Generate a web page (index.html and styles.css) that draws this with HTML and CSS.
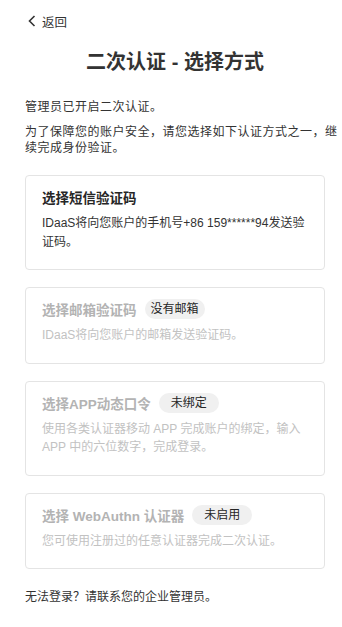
FILE: index.html
```html
<!DOCTYPE html>
<html lang="zh-CN">
<head>
    <meta charset="UTF-8">
    <meta name="viewport" content="width=device-width, initial-scale=1.0">
    <title>二次认证 - 选择方式</title>
    <link rel="stylesheet" href="styles.css">
</head>
<body>
    <div class="page">
        <a class="back" href="#">
            <svg width="8" height="12" viewBox="0 0 8 12"><polyline points="6.5,1 1.5,6 6.5,11" fill="none" stroke="#333" stroke-width="1.6"/></svg>
            <span>返回</span>
        </a>
        <h2 class="title">二次认证 - 选择方式</h2>
        <p class="intro">管理员已开启二次认证。</p>
        <p class="intro">为了保障您的账户安全，请您选择如下认证方式之一，继续完成身份验证。</p>

        <div class="method">
            <div class="method-head">
                <span class="method-name">选择短信验证码</span>
            </div>
            <p class="method-desc">IDaaS将向您账户的手机号+86 159******94发送验证码。</p>
        </div>

        <div class="method disabled">
            <div class="method-head">
                <span class="method-name">选择邮箱验证码</span>
                <span class="tag">没有邮箱</span>
            </div>
            <p class="method-desc">IDaaS将向您账户的邮箱发送验证码。</p>
        </div>

        <div class="method disabled">
            <div class="method-head">
                <span class="method-name">选择APP动态口令</span>
                <span class="tag">未绑定</span>
            </div>
            <p class="method-desc">使用各类认证器移动 APP 完成账户的绑定，输入 APP 中的六位数字，完成登录。</p>
        </div>

        <div class="method disabled">
            <div class="method-head">
                <span class="method-name">选择 WebAuthn 认证器</span>
                <span class="tag">未启用</span>
            </div>
            <p class="method-desc">您可使用注册过的任意认证器完成二次认证。</p>
        </div>

        <p class="help">无法登录？请联系您的企业管理员。</p>
    </div>
</body>
</html>
```

FILE: styles.css
```css
body {
    margin: 0;
    background: #fff;
    font-family: "Liberation Sans", "Noto Sans CJK SC", sans-serif;
    color: #333;
}
.page {
    width: 300px;
    padding: 11px 0 0 25px;
}
.back {
    display: flex;
    align-items: center;
    height: 20px;
    color: #333;
    text-decoration: none;
    font-size: 12.5px;
}
.back svg {
    margin: 0 6px 0 3px;
}
.title {
    margin: 17px 0 0;
    font-size: 20px;
    line-height: 28px;
    font-weight: bold;
    text-align: center;
    color: #333;
}
.intro {
    margin: 23px -15px 0 0;
    font-size: 12px;
    letter-spacing: 0.5px;
    line-height: 16px;
    word-break: break-all;
}
.intro + .intro {
    margin-top: 9px;
}
.method {
    margin-top: 19px;
    padding: 10px 16px 18px;
    border: 1px solid #e4e4e4;
    border-radius: 4px;
}
.method + .method {
    margin-top: 17px;
}
.method-head {
    display: flex;
    align-items: center;
    height: 22px;
}
.method-name {
    font-size: 13.5px;
    font-weight: bold;
    color: #262626;
}
.tag {
    margin-left: 8px;
    min-width: 48px;
    padding: 0 6px;
    height: 20px;
    line-height: 20px;
    border-radius: 10px;
    background: #f0f0f0;
    color: #262626;
    font-size: 12px;
    text-align: center;
}
.method-desc {
    margin: 6px 0 0;
    font-size: 12px;
    line-height: 18.5px;
}
.disabled .method-name {
    color: #b3b3b3;
}
.disabled .method-desc {
    color: #c2c2c2;
}
.help {
    margin: 20px 0 0;
    font-size: 12px;
    line-height: 16px;
}
```
